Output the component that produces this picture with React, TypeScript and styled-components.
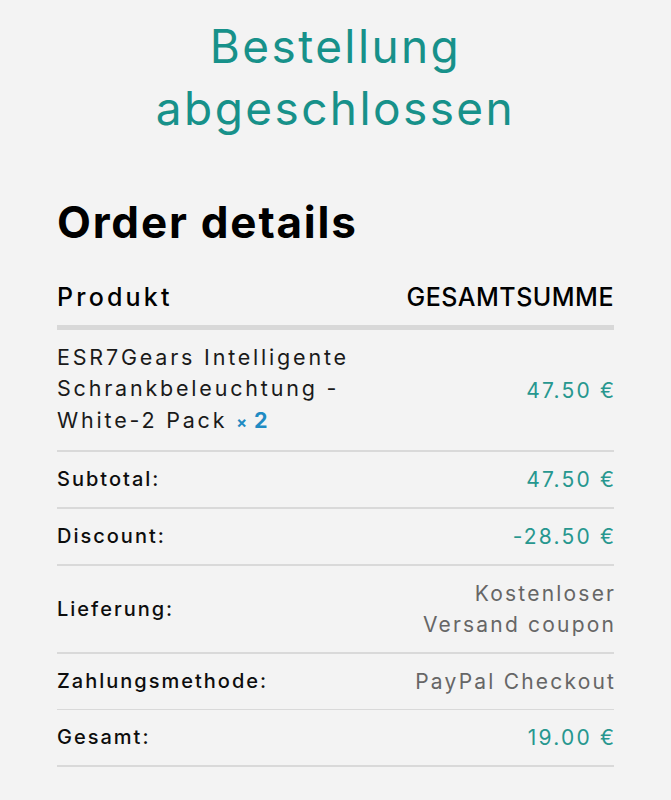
import React from "react";
import styled, { createGlobalStyle } from "styled-components";

const GlobalStyle = createGlobalStyle`
  html, body { margin: 0; padding: 0; background: #f3f3f3; }
  body { font-family: "Inter", "Liberation Sans", sans-serif; color: #111; }
`;

const Page = styled.main`
  padding: 0 57px 34px;
  background: #f3f3f3;
  min-height: 800px;
  box-sizing: border-box;
`;

const Title = styled.h1`
  margin: 15px 0 0;
  text-align: center;
  font-size: 46px;
  line-height: 62px;
  font-weight: 400;
  letter-spacing: 2.4px;
  color: #17918a;
`;

const SectionTitle = styled.h2`
  margin: 57px 0 21px;
  font-size: 44px;
  line-height: 52.8px;
  font-weight: 700;
  letter-spacing: 1.8px;
  color: #000;
`;

const Table = styled.table`
  width: 100%;
  border-collapse: collapse;
  table-layout: fixed;
`;

const HeadCell = styled.th<{ $right?: boolean; $spacing: number }>`
  padding: 12px 0 12px;
  border-bottom: 5px solid #d8d8d8;
  font-size: 25px;
  line-height: 31px;
  font-weight: 500;
  letter-spacing: ${(p) => p.$spacing}px;
  text-align: ${(p) => (p.$right ? "right" : "left")};
  color: #000;
`;

const ProductCell = styled.td`
  padding: 12px 0;
  border-bottom: 2px solid #d9d9d9;
  font-size: 21.5px;
  line-height: 31.5px;
  font-weight: 400;
  letter-spacing: 2.8px;
  color: #1a1a1a;
  vertical-align: middle;
`;

const Quantity = styled.strong`
  font-weight: 700;
  color: #1f8bc3;
  letter-spacing: 0;
  white-space: nowrap;
`;

const Times = styled.span`
  display: inline-block;
  margin-right: 7px;
  font-size: 16px;
`;

const LabelCell = styled.th<{ $thin?: boolean }>`
  padding: 12px 0;
  border-bottom: ${(p) => (p.$thin ? 1 : 2)}px solid #d9d9d9;
  font-size: 20px;
  line-height: 31px;
  font-weight: 500;
  letter-spacing: 2px;
  text-align: left;
  color: #0d0d0d;
  vertical-align: middle;
`;

const ValueCell = styled.td<{ $tone: "teal" | "gray"; $thin?: boolean }>`
  padding: 12px 0;
  border-bottom: ${(p) => (p.$thin ? 1 : 2)}px solid #d9d9d9;
  font-size: 21px;
  line-height: 31px;
  font-weight: 400;
  letter-spacing: 2.2px;
  text-align: right;
  color: ${(p) => (p.$tone === "teal" ? "#27978f" : "#666666")};
  vertical-align: middle;
`;

/* cancels the trailing letter-spacing so right-aligned text ends flush */
const Value = styled.span`
  display: inline-block;
  margin-right: -2.2px;
`;

const rows: { label: string; value: string; tone: "teal" | "gray"; thin?: boolean }[] = [
  { label: "Subtotal:", value: "47.50 €", tone: "teal" },
  { label: "Discount:", value: "-28.50 €", tone: "teal" },
  { label: "Lieferung:", value: "Kostenloser Versand coupon", tone: "gray" },
  { label: "Zahlungsmethode:", value: "PayPal Checkout", tone: "gray", thin: true },
  { label: "Gesamt:", value: "19.00 €", tone: "teal" },
];

export default function App() {
  return (
    <>
      <GlobalStyle />
      <Page>
        <Title>
          Bestellung
          <br />
          abgeschlossen
        </Title>
        <SectionTitle>Order details</SectionTitle>
        <Table>
          <colgroup>
            <col style={{ width: "340px" }} />
            <col />
          </colgroup>
          <thead>
            <tr>
              <HeadCell $spacing={3.2}>Produkt</HeadCell>
              <HeadCell $right $spacing={0.5}>
                GESAMTSUMME
              </HeadCell>
            </tr>
          </thead>
          <tbody>
            <tr>
              <ProductCell>
                ESR7Gears Intelligente Schrankbeleuchtung - White-2 Pack{" "}
                <Quantity>
                  <Times>×</Times>2
                </Quantity>
              </ProductCell>
              <ValueCell $tone="teal">
                <Value>47.50 €</Value>
              </ValueCell>
            </tr>
          </tbody>
          <tfoot>
            {rows.map((r) => (
              <tr key={r.label}>
                <LabelCell scope="row" $thin={r.thin}>
                  {r.label}
                </LabelCell>
                <ValueCell $tone={r.tone} $thin={r.thin}>
                  <Value>{r.value}</Value>
                </ValueCell>
              </tr>
            ))}
          </tfoot>
        </Table>
      </Page>
    </>
  );
}
